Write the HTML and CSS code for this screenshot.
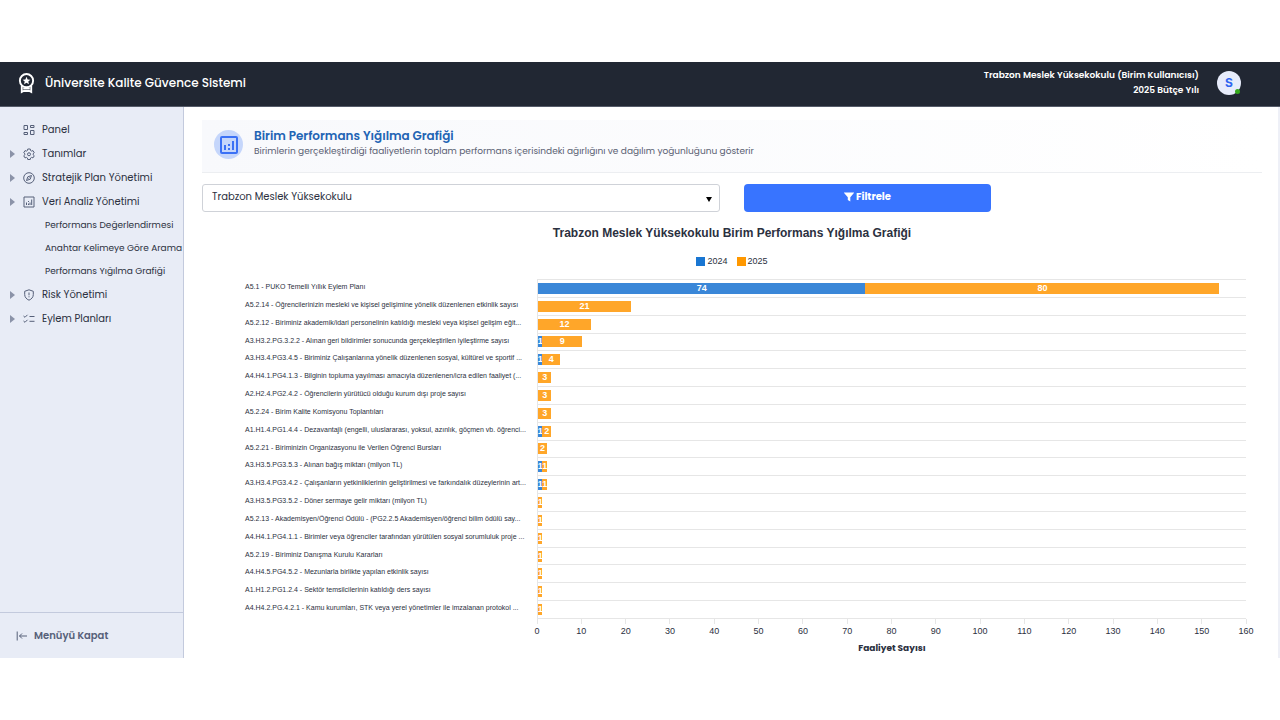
FILE: index.html
```html
<!DOCTYPE html>
<html lang="tr">
<head>
    <meta charset="UTF-8">
    <meta name="viewport" content="width=device-width, initial-scale=1.0">
    <title>Üniversite Kalite Güvence Sistemi</title>
    <link rel="stylesheet" href="styles.css">
</head>
<body>
    <header class="topbar">
        <a href="#" class="brand">
            <svg class="brand-logo" viewBox="0 0 18 22" fill="none" stroke="#fff" stroke-width="2">
                <circle cx="9" cy="8.500" r="7"/>
                <path d="M4 14v6.500l2-1h6l2 1V14M5.500 17h7"/>
                <path fill="#fff" stroke="none" d="M9 4.500l1.200 2.700 2.900.3-2.200 1.900.7 2.900L9 10.800l-2.600 1.500.7-2.900-2.200-1.900 2.900-.3z"/>
            </svg>
            <span>Üniversite Kalite Güvence Sistemi</span>
        </a>
        <div class="user">
            <div class="user-info">
                <div>Trabzon Meslek Yüksekokulu (Birim Kullanıcısı)</div>
                <div>2025 Bütçe Yılı</div>
            </div>
            <div class="avatar">S<span class="online"></span></div>
        </div>
    </header>

    <div class="layout">
        <aside class="sidebar">
            <nav class="menu">
                <a href="#" class="menu-item">
                    <span class="no-arrow"></span>
                    <svg class="icon" viewBox="0 0 12 12"><path d="M1 1.500h3.500v4H1zM7.500 1.500H11v2H7.500zM7.500 6.500H11v4H7.500zM1 8.500h3.500v2H1z"/></svg>
                    Panel
                </a>
                <a href="#" class="menu-item">
                    <span class="arrow"></span>
                    <svg class="icon icon-gear" viewBox="0 0 24 24"><path d="M9.500 2h5l.6 3 2 1.200 2.900-1 2.500 4.300-2.300 2v2l2.300 2-2.500 4.300-2.900-1-2 1.200-.6 3h-5l-.6-3-2-1.200-2.900 1L1.500 15.500l2.300-2v-2l-2.300-2L4 5.200l2.900 1 2-1.200z"/><circle cx="12" cy="12.500" r="3"/></svg>
                    Tanımlar
                </a>
                <a href="#" class="menu-item">
                    <span class="arrow"></span>
                    <svg class="icon" viewBox="0 0 12 12"><circle cx="6" cy="6" r="5.300"/><path d="M8.500 3.500L7.200 7.200 3.500 8.500l1.300-3.700zM5.500 6.500l1-1"/></svg>
                    Stratejik Plan Yönetimi
                </a>
                <a href="#" class="menu-item">
                    <span class="arrow"></span>
                    <svg class="icon" viewBox="0 0 12 12"><path d="M1 1h10v10H1zM3.500 6.500V9M5.500 7.500V9M5.500 5v1M7 6.500V9M8.700 3.500V9"/></svg>
                    Veri Analiz Yönetimi
                </a>
                <a href="#" class="menu-item sub">Performans Değerlendirmesi</a>
                <a href="#" class="menu-item sub">Anahtar Kelimeye Göre Arama</a>
                <a href="#" class="menu-item sub">Performans Yığılma Grafiği</a>
                <a href="#" class="menu-item">
                    <span class="arrow"></span>
                    <svg class="icon" viewBox="0 0 12 12"><path d="M6 .8l4.300 1.500v3.200c0 2.700-1.700 4.600-4.300 5.700-2.600-1.100-4.300-3-4.300-5.700V2.300zM6 3.500v2.800M6 7.300v1"/></svg>
                    Risk Yönetimi
                </a>
                <a href="#" class="menu-item">
                    <span class="arrow"></span>
                    <svg class="icon" viewBox="0 0 12 12"><path d="M.5 3l1.500 1.300 2.500-2.500M.5 8l1.500 1.300 2.500-2.500M6.500 3.500h5M6.500 8.300h5"/></svg>
                    Eylem Planları
                </a>
            </nav>
            <button class="close-menu">
                <svg class="icon" viewBox="0 0 12 12"><path d="M1.200 1.500v9M11 6H3.500M6 3.500L3.500 6 6 8.500"/></svg>
                Menüyü Kapat
            </button>
        </aside>

        <main class="content">
            <div class="page-head">
                <div class="page-icon">
                    <svg viewBox="0 0 18 18" fill="none" stroke="#3b71f5" stroke-width="2"><rect x="1" y="1" width="16" height="16" rx="1"/><path d="M5 9v5M9 12v2M9 8v2M13 5v9"/></svg>
                </div>
                <div class="page-title">
                    <h1>Birim Performans Yığılma Grafiği</h1>
                    <p>Birimlerin gerçekleştirdiği faaliyetlerin toplam performans içerisindeki ağırlığını ve dağılım yoğunluğunu gösterir</p>
                </div>
            </div>

            <form class="filters">
                <div class="select-box">
                    <select id="unit" aria-label="Birim">
                        <option>Trabzon Meslek Yüksekokulu</option>
                    </select>
                </div>
                <button type="button" class="filter-btn">
                    <svg viewBox="0 0 10 10" fill="#fff"><path d="M.3.500h9.400c.3 0 .4.400.2.600L6.300 5.200V9.600L3.800 8V5.200L.1 1.100C-.1.900 0 .500.300.500z"/></svg>
                    Filtrele
                </button>
            </form>

            <section class="chart">
                <h2>Trabzon Meslek Yüksekokulu Birim Performans Yığılma Grafiği</h2>
                <div class="legend">
                    <span><i class="y2024"></i>2024</span>
                    <span><i class="y2025"></i>2025</span>
                </div>
                <div class="rows" id="rows"></div>
                <div class="axis" id="axis"></div>
                <div class="axis-title">Faaliyet Sayısı</div>
            </section>
        </main>
    </div>

    <script>
        const max = 160;
        // label, 2024, 2025
        const data = [
            ["A5.1 - PUKO Temelli Yıllık Eylem Planı", 74, 80],
            ["A5.2.14 - Öğrencilerinizin mesleki ve kişisel gelişimine yönelik düzenlenen etkinlik sayısı", 0, 21],
            ["A5.2.12 - Biriminiz akademik/idari personelinin katıldığı mesleki veya kişisel gelişim eğit...", 0, 12],
            ["A3.H3.2.PG.3.2.2 - Alınan geri bildirimler sonucunda gerçekleştirilen iyileştirme sayısı", 1, 9],
            ["A3.H3.4.PG3.4.5 - Biriminiz Çalışanlarına yönelik düzenlenen sosyal, kültürel ve sportif ...", 1, 4],
            ["A4.H4.1.PG4.1.3 - Bilginin topluma yayılması amacıyla düzenlenen/icra edilen faaliyet (...", 0, 3],
            ["A2.H2.4.PG2.4.2 - Öğrencilerin yürütücü olduğu kurum dışı proje sayısı", 0, 3],
            ["A5.2.24 - Birim Kalite Komisyonu Toplantıları", 0, 3],
            ["A1.H1.4.PG1.4.4 - Dezavantajlı (engelli, uluslararası, yoksul, azınlık, göçmen vb. öğrenci...", 1, 2],
            ["A5.2.21 - Biriminizin Organizasyonu ile Verilen Öğrenci Bursları", 0, 2],
            ["A3.H3.5.PG3.5.3 - Alınan bağış miktarı (milyon TL)", 1, 1],
            ["A3.H3.4.PG3.4.2 - Çalışanların yetkinliklerinin geliştirilmesi ve farkındalık düzeylerinin art...", 1, 1],
            ["A3.H3.5.PG3.5.2 - Döner sermaye gelir miktarı (milyon TL)", 0, 1],
            ["A5.2.13 - Akademisyen/Öğrenci Ödülü - (PG2.2.5 Akademisyen/öğrenci bilim ödülü say...", 0, 1],
            ["A4.H4.1.PG4.1.1 - Birimler veya öğrenciler tarafından yürütülen sosyal sorumluluk proje ...", 0, 1],
            ["A5.2.19 - Biriminiz Danışma Kurulu Kararları", 0, 1],
            ["A4.H4.5.PG4.5.2 - Mezunlarla birlikte yapılan etkinlik sayısı", 0, 1],
            ["A1.H1.2.PG1.2.4 - Sektör temsilcilerinin katıldığı ders sayısı", 0, 1],
            ["A4.H4.2.PG.4.2.1 - Kamu kurumları, STK veya yerel yönetimler ile imzalanan protokol ...", 0, 1]
        ];

        function bar(cls, value) {
            if (!value) return "";
            return `<div class="bar ${cls}" style="width: ${value / max * 100}%">${value}</div>`;
        }

        document.getElementById("rows").innerHTML = data.map(([label, a, b]) =>
            `<div class="row-label">${label}</div>
             <div class="row-bars">${bar("y2024", a)}${bar("y2025", b)}</div>`
        ).join("");

        var ticks = "";
        for (let i = 0; i <= max; i += 10) {
            ticks += `<span class="tick">${i}</span>`;
        }
        document.getElementById("axis").innerHTML = ticks;
    </script>
</body>
</html>
```

FILE: styles.css
```css
* {
  box-sizing: border-box;
}

body {
  margin: 0;
  padding: 62px 0;
  background-color: #fff;
  font-family: Poppins, Inter, "Open Sans", sans-serif;
  color: #2b3040;
}

.topbar {
  display: flex;
  justify-content: space-between;
  align-items: center;
  height: 45px;
  padding: 0 39px 3px 18px;
  background-color: #212733;
  border-bottom: 1px solid #555b69;
  color: #fff;
}

.brand {
  display: flex;
  align-items: center;
  gap: 10px;
  color: #fff;
  font-size: 12px;
  font-weight: 500;
  text-decoration: none;
}

.brand-logo {
  width: 17px;
  height: 22px;
}

.user {
  display: flex;
  align-items: center;
  gap: 18px;
}

.user-info {
  font-size: 9px;
  font-weight: 600;
  line-height: 15px;
  text-align: right;
}

.avatar {
  position: relative;
  width: 24px;
  height: 24px;
  border-radius: 50%;
  background-color: #e7ecfb;
  color: #2f66f0;
  font-family: Inter, "Liberation Sans", sans-serif;
  font-size: 12px;
  font-weight: 700;
  line-height: 24px;
  text-align: center;
}

.online {
  position: absolute;
  right: 1px;
  bottom: 1px;
  width: 5px;
  height: 5px;
  border-radius: 50%;
  background-color: #35a91c;
}

.layout {
  display: flex;
  border-right: 2px solid #eef0f7;
}

.sidebar {
  display: flex;
  flex-direction: column;
  flex: 0 0 184px;
  background-color: #e8ecf6;
  border-right: 1px solid #c3cadd;
}

.menu {
  flex: 1;
  padding-top: 11px;
}

.menu-item {
  display: flex;
  align-items: center;
  height: 24px;
  padding-left: 10px;
  color: #2b3040;
  font-size: 10px;
  text-decoration: none;
  white-space: nowrap;
}

.menu-item.sub {
  height: 23px;
  padding-left: 45px;
  font-size: 9px;
}

.arrow {
  border-left: 5px solid #8b93a8;
  border-top: 4px solid transparent;
  border-bottom: 4px solid transparent;
  margin-right: 8px;
}

.no-arrow {
  width: 13px;
}

.icon {
  width: 12px;
  height: 12px;
  fill: none;
  stroke: #566079;
  stroke-width: 1;
}

.icon-gear {
  stroke-width: 2;
}

.menu-item .icon {
  margin-right: 7px;
}

.close-menu {
  display: flex;
  align-items: center;
  gap: 6px;
  height: 46px;
  padding: 0 16px;
  border: none;
  border-top: 1px solid #c3cadd;
  background: none;
  color: #566079;
  font-family: inherit;
  font-size: 10px;
  font-weight: 600;
}

.content {
  flex: 1;
  min-width: 0;
  padding: 13px 16px 0 18px;
}

.page-head {
  display: flex;
  align-items: center;
  gap: 11px;
  height: 53px;
  padding: 0 0 3px 12px;
  background: linear-gradient(90deg, #f8f9fc, #fff);
  border-bottom: 1px solid #eceef1;
}

.page-icon {
  display: flex;
  align-items: center;
  justify-content: center;
  width: 29px;
  height: 29px;
  border-radius: 50%;
  background-color: #c5d6fb;
}

.page-icon svg {
  width: 18px;
  height: 18px;
}

.page-title {
  padding-bottom: 3px;
}

.page-head h1 {
  margin: 0;
  color: #2264b4;
  font-size: 12px;
  font-weight: 600;
  line-height: 16px;
}

.page-head p {
  margin: 0;
  color: #596072;
  font-size: 9px;
  line-height: 15px;
}

.filters {
  display: grid;
  grid-template-columns: repeat(12, 1fr);
  column-gap: 24px;
  margin-top: 11px;
}

.select-box {
  position: relative;
  grid-column: span 6;
}

.select-box::after {
  content: "";
  position: absolute;
  right: 8px;
  top: 13px;
  border-top: 5px solid #000;
  border-left: 3px solid transparent;
  border-right: 3px solid transparent;
}

.select-box select {
  appearance: none;
  display: block;
  width: 100%;
  height: 28px;
  padding: 0 9px 3px;
  border: 1px solid #cfd2d8;
  border-radius: 3px;
  background-color: #fff;
  color: #2b3040;
  font-family: inherit;
  font-size: 10px;
}

.filter-btn {
  grid-column: span 3;
  display: flex;
  align-items: center;
  justify-content: center;
  gap: 2px;
  height: 28px;
  padding-bottom: 3px;
  border: none;
  border-radius: 4px;
  background-color: #3874ff;
  color: #fff;
  font-family: inherit;
  font-size: 10px;
  font-weight: 700;
}

.filter-btn svg {
  width: 10px;
  height: 10px;
}

.chart {
  padding-right: 16px;
  padding-left: 43px;
  font-family: "Liberation Sans", Arial, sans-serif;
}

.chart h2 {
  margin: 13px 0 13px;
  margin-left: -27px;
  font-size: 12px;
  line-height: 16px;
  text-align: center;
}

.legend {
  display: flex;
  justify-content: center;
  gap: 9px;
  margin-left: -27px;
  margin-bottom: 11px;
  font-size: 9px;
  line-height: 14px;
}

.legend span {
  display: flex;
  align-items: center;
  gap: 2px;
}

.legend i {
  width: 9px;
  height: 9px;
}

.y2024 {
  background-color: #3a87d8;
}

.y2025 {
  background-color: #ffa629;
}

.legend .y2024 {
  background-color: #1976d2;
}

.legend .y2025 {
  background-color: #ff9800;
}

.rows {
  display: grid;
  grid-template-columns: 292px 1fr;
  grid-template-rows: repeat(19, 1fr);
  height: 339px;
}

.row-label {
  font-size: 7px;
  line-height: 15px;
  white-space: nowrap;
}

.row-bars {
  display: flex;
  align-items: center;
  border-top: 1px solid #e6e6e6;
  border-left: 1px solid #e6e6e6;
}

.bar {
  display: flex;
  justify-content: center;
  height: 11px;
  color: #fff;
  font-size: 9px;
  font-weight: 700;
  line-height: 10px;
}

.axis {
  display: flex;
  justify-content: space-between;
  margin-left: 292px;
  border-top: 1px solid #e6e6e6;
  font-size: 9px;
}

.tick {
  display: flex;
  flex-direction: column;
  align-items: center;
  width: 0;
  line-height: 15px;
}

.tick::before {
  content: "";
  width: 1px;
  height: 5px;
  background-color: #e6e6e6;
}

.axis-title {
  margin-left: 293px;
  font-family: Poppins, Inter, "Open Sans", sans-serif;
  font-size: 9px;
  font-weight: 700;
  line-height: 19px;
  text-align: center;
}
```
